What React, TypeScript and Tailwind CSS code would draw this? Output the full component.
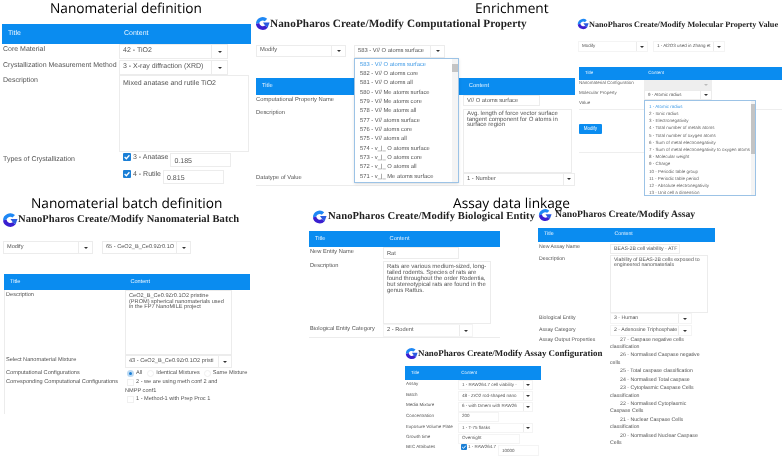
import React from "react";

const Logo = ({ className }: { className: string }) => (
  <svg viewBox="0 0 32 32" className={className}>
    <path d="M26 6 A14.5 14.5 0 0 0 2 17 L9 15 A8 8 0 0 1 21 11 Z" fill="#1e88f5" />
    <path d="M2 17 A14.5 14.5 0 0 0 27 25 L21.5 20.5 A8 8 0 0 1 9 15 Z" fill="#3a1fd0" />
    <path d="M17 14 L31 14 L27 25 L21.5 20.5 Z" fill="#2a5ae0" />
  </svg>
);

const Header = ({ className, content }: { className: string; content: string }) => (
  <div className={`flex items-center bg-[#0a8cf0] text-[#e8f4ff] ${className}`}>
    <span className="pl-[6px]">Title</span>
    <span className={content}>Content</span>
  </div>
);

const Select = ({ label, className, caret = "w-[16px]" }: { label: string; className: string; caret?: string }) => (
  <div className={`flex shrink-0 items-center border border-[#ececec] bg-white text-[#555] ${className}`}>
    <span className="flex-1 overflow-hidden whitespace-nowrap pl-[3px]">{label}</span>
    <span className={`flex h-full items-center justify-center border-l border-[#ececec] ${caret}`}>
      <span className="h-0 w-0 border-x-[2px] border-t-[2px] border-x-transparent border-t-[#333]" />
    </span>
  </div>
);

const Box = ({ children, className }: { children?: React.ReactNode; className: string }) => (
  <div className={`shrink-0 border border-[#ececec] bg-white pl-[3px] text-[#555] ${className}`}>{children}</div>
);

const Check = ({ className }: { className: string }) => (
  <span className={`flex shrink-0 items-center justify-center rounded-[1px] bg-[#1a7fd6] ${className}`}>
    <svg viewBox="0 0 10 10" className="h-full w-full">
      <path d="M2 5 L4.2 7.2 L8 2.8" fill="none" stroke="#fff" strokeWidth="1.6" />
    </svg>
  </span>
);

const SectionTitle = ({ children, className }: { children: string; className: string }) => (
  <div className={`absolute whitespace-nowrap font-['Open_Sans',sans-serif] text-[13.7px] leading-[16px] text-black ${className}`}>{children}</div>
);

const PageTitle = ({ children, className }: { children: string; className: string }) => (
  <div className={`whitespace-nowrap font-['Liberation_Serif',serif] font-bold text-[#222] ${className}`}>{children}</div>
);

const computationalItems = [
  "583 - V// O atoms surface",
  "582 - V// O atoms core",
  "581 - V// O atoms all",
  "580 - V// Me atoms surface",
  "579 - V// Me atoms core",
  "578 - V// Me atoms all",
  "577 - V// atoms surface",
  "576 - V// atoms core",
  "575 - V// atoms all",
  "574 - v_|_ O atoms surface",
  "573 - v_|_ O atoms core",
  "572 - v_|_ O atoms all",
  "571 - v_|_ Me atoms surface",
];

const molecularItems = [
  "1 - Atomic radius",
  "2 - Ionic radius",
  "3 - Electronegativity",
  "4 - Total number of metals atoms",
  "5 - Total number of oxygen atoms",
  "6 - Sum of metal electronegativity",
  "7 - Sum of metal electronegativity to oxygen atoms",
  "8 - Molecular weight",
  "9 - Charge",
  "10 - Periodic table group",
  "11 - Periodic table period",
  "12 - Absolute electronegativity",
  "13 - Unit cell a dimension",
];

const assayOutputs = [
  ["27 - Caspase negative cells", "classification"],
  ["26 - Normalised Caspase negative", "cells"],
  ["25 - Total caspase classification"],
  ["24 - Normalised Total caspase"],
  ["23 - Cytoplasmic Caspase Cells", "classification"],
  ["22 - Normalised Cytoplasmic", "Caspase Cells"],
  ["21 - Nuclear Caspase Cells", "classification"],
  ["20 - Normalised Nuclear Caspase", "Cells"],
];

const NanomaterialPanel = () => (
  <div className="absolute left-[2px] top-[24px] w-[249px] text-[7px] text-[#555]">
    <Header className="h-[20px]" content="ml-[103px]" />
    <div className="flex h-[16px]">
      <span className="w-[117px] pl-[1px] pt-[1px]">Core Material</span>
      <Select label="42 - TiO2" className="h-[15px] w-[109px]" caret="w-[16px]" />
    </div>
    <div className="flex h-[15px]">
      <span className="w-[117px] whitespace-nowrap pl-[1px] pt-[1px]">Crystallization Measurement Method</span>
      <Select label="3 - X-ray diffraction (XRD)" className="h-[15px] w-[109px]" />
    </div>
    <div className="flex h-[77px]">
      <span className="w-[117px] pl-[1px] pt-[1px]">Description</span>
      <Box className="h-[77px] w-[130px] pt-[3px]">Mixed anatase and rutile TiO2</Box>
    </div>
    <div className="flex">
      <span className="w-[117px] pl-[1px] pt-[3px]">Types of Crystallization</span>
      <div className="flex flex-col gap-[3px] pt-[1px]">
        <div className="flex items-start pl-[4px]">
          <Check className="h-[8px] w-[8px]" />
          <span className="ml-[2px] whitespace-nowrap">3 - Anatase</span>
          <Box className="ml-[2px] h-[14px] w-[61px] pt-[3px]">0.185</Box>
        </div>
        <div className="flex items-start pl-[4px]">
          <Check className="h-[8px] w-[8px]" />
          <span className="ml-[2px] whitespace-nowrap">4 - Rutile</span>
          <Box className="ml-[2px] h-[14px] w-[61px] pt-[3px]">0.815</Box>
        </div>
      </div>
    </div>
  </div>
);

const BatchPanel = () => (
  <div className="absolute left-[2px] top-[212px] w-[248px] text-[5.6px] text-[#555]">
    <div className="flex items-center">
      <Logo className="h-[16px] w-[16px]" />
      <PageTitle className="text-[10.5px] tracking-[0.1px]">NanoPharos Create/Modify Nanomaterial Batch</PageTitle>
    </div>
    <div className="mt-[13px] flex gap-[9px] pl-[1px]">
      <Select label="Modify" className="h-[13px] w-[90px]" caret="w-[14px]" />
      <Select label="65 - CeO2_B_Ce0.9Zr0.1O" className="h-[13px] w-[89px]" caret="w-[14px]" />
    </div>
    <div className="mt-[20px] pl-[2px]">
      <Header className="h-[16px]" content="ml-[110px]" />
      <div className="border-l border-[#ececec]">
        <div className="flex h-[65px] items-start">
          <span className="w-[120px] pl-[1px] pt-[1px]">Description</span>
          <Box className="h-[65px] w-[107px] pr-[5px] pt-[3px] leading-[5.6px]">
            CeO2_B_Ce0.9Zr0.1O2 pristine (PROM) spherical nanomaterials used in the FP7 NanoMILE project
          </Box>
        </div>
        <div className="flex h-[14px]">
          <span className="w-[120px] pl-[1px] pt-[1px]">Select Nanomaterial Mixture</span>
          <Select label="43 - CeO2_B_Ce0.9Zr0.1O2 pristi" className="h-[13px] w-[107px]" caret="w-[13px]" />
        </div>
        <div className="flex h-[9px] items-center whitespace-nowrap">
          <span className="w-[120px] pl-[1px]">Computational Configurations</span>
          <span className="ml-[2px] h-[7px] w-[7px] rounded-full border-2 border-[#bcd9f2] bg-[#1a7fd6]" />
          <span className="ml-[2px]">All</span>
          <span className="ml-[5px] h-[7px] w-[7px] rounded-full border border-[#f0f0f0]" />
          <span className="ml-[2px]">Identical Mixtures</span>
          <span className="ml-[4px] h-[7px] w-[7px] rounded-full border border-[#f0f0f0]" />
          <span className="ml-[2px]">Same Mixture</span>
        </div>
        <div className="flex">
          <span className="w-[120px] shrink-0 whitespace-nowrap pl-[1px]">Corresponding Computational Configurations</span>
          <div className="flex flex-col leading-[8.5px]">
            <div className="flex items-center whitespace-nowrap pl-[2px]">
              <span className="mr-[2px] h-[7px] w-[7px] border border-[#f0f0f0]" />
              2 - we are using meth conf 2 and
            </div>
            <span>NMPP conf1</span>
            <div className="flex items-center whitespace-nowrap pl-[2px]">
              <span className="mr-[2px] h-[7px] w-[7px] border border-[#f0f0f0]" />
              1 - Method-1 with Prep Proc 1
            </div>
          </div>
        </div>
        <div className="h-[10px]" />
      </div>
    </div>
  </div>
);

const ComputationalPanel = () => (
  <div className="absolute left-[255px] top-[15px] w-[320px] text-[5.8px] text-[#555]">
    <div className="flex items-center">
      <Logo className="h-[17px] w-[15px]" />
      <PageTitle className="pt-[1px] text-[11.2px] tracking-[0.1px]">NanoPharos Create/Modify Computational Property</PageTitle>
    </div>
    <div className="relative mt-[12px] flex gap-[8px] pl-[1px]">
      <Select label="Modify" className="h-[12px] w-[90px]" caret="w-[14px]" />
      <Select label="583 - V// O atoms surface" className="h-[13px] w-[91px] border-[#8fbfe8]" caret="w-[14px]" />
      <div className="absolute left-[99px] top-[13px] z-10 flex h-[125px] w-[105px] border border-[#9cc3e6] bg-white shadow-sm">
        <div className="flex-1 whitespace-nowrap pl-[5px] pt-[2px] leading-[9.33px]">
          {computationalItems.map((item, i) => (
            <div key={item} className={i === 0 ? "text-[#3f9ae6]" : ""}>{item}</div>
          ))}
        </div>
        <div className="w-[6px] bg-[#f4f4f4] pt-[5px]">
          <div className="h-[8px] bg-[#c4c4c4]" />
        </div>
      </div>
    </div>
    <div className="mt-[20px] pl-[1px]">
      <Header className="h-[17px]" content="ml-[196px]" />
      <div className="flex h-[14px]">
        <span className="w-[207px] pt-[1px]">Computational Property Name</span>
        <Box className="h-[11px] w-[77px] pt-[1px]">V// O atoms surface</Box>
      </div>
      <div className="flex h-[64px]">
        <span className="w-[207px]">Description</span>
        <Box className="h-[64px] w-[109px] pr-[2px] pt-[2px] text-[6px] leading-[5.8px]">
          Avg. length of force vector surface tangent component for O atoms in surface region
        </Box>
      </div>
      <div className="flex h-[13px] border-b border-[#ececec]">
        <span className="w-[207px] pt-[1px]">Datatype of Value</span>
        <Select label="1 - Number" className="h-[13px] w-[112px]" caret="w-[11px]" />
      </div>
    </div>
  </div>
);

const MolecularPanel = () => (
  <div className="absolute left-[577px] top-[17px] w-[205px] text-[4.5px] text-[#666]">
    <div className="flex items-center">
      <Logo className="h-[12px] w-[12px]" />
      <PageTitle className="pt-[2px] text-[8.2px]">NanoPharos Create/Modify Molecular Property Value</PageTitle>
    </div>
    <div className="mt-[10px] flex gap-[5px] pl-[1px]">
      <Select label="Modify" className="h-[11px] w-[70px] border-[#f4f4f4]" caret="w-[11px]" />
      <Select label="1 - Al2O3 used in Zhang et" className="h-[11px] w-[72px] border-[#f4f4f4]" caret="w-[11px]" />
    </div>
    <div className="mt-[15px] pl-[2px]">
      <Header className="h-[13px]" content="ml-[55px]" />
      <div className="relative">
        <div className="flex h-[10px]">
          <span className="w-[65px] whitespace-nowrap">Nanomaterial Configuration</span>
          <div className="flex h-[10px] w-[68px] items-center justify-end bg-[#eeeeee] pr-[4px] text-[#aaa]">
            <span className="h-0 w-0 border-x-[2px] border-t-[2px] border-x-transparent border-t-[#bbb]" />
          </div>
        </div>
        <div className="flex h-[10px]">
          <span className="w-[65px]">Molecular Property</span>
          <Select label="9 - Atomic radius" className="h-[10px] w-[68px] border-[#8fbfe8]" caret="w-[11px]" />
        </div>
        <div className="h-[10px] border-b border-[#eeeeee]">Value</div>
        <div className="absolute left-[65px] top-[20px] z-10 flex h-[96px] w-[112px] border border-[#9cc3e6] bg-white">
          <div className="flex-1 whitespace-nowrap pl-[4px] pt-[1.5px] leading-[7.2px]">
            {molecularItems.map((item, i) => (
              <div key={item} className={i === 0 ? "text-[#3f9ae6]" : ""}>{item}</div>
            ))}
          </div>
          <div className="w-[4px] bg-[#f4f4f4] pt-[3px]">
            <div className="h-[50px] bg-[#c4c4c4]" />
          </div>
        </div>
      </div>
      <button className="mt-[14px] h-[10px] w-[23px] rounded-[1px] bg-[#0a8cf0] text-white">Modify</button>
      <div className="mt-[18px] w-[65px] border-b border-[#eeeeee]" />
    </div>
  </div>
);

const BiologicalPanel = () => (
  <div className="absolute left-[309px] top-[209px] w-[230px] text-[5.7px] text-[#555]">
    <div className="flex items-center pl-[3px]">
      <Logo className="h-[16px] w-[15px]" />
      <PageTitle className="pl-[1px] text-[10.6px] tracking-[0.1px]">NanoPharos Create/Modify Biological Entity</PageTitle>
    </div>
    <div className="mt-[6px] w-[191px]">
      <Header className="h-[16px]" content="ml-[64px]" />
      <div className="flex h-[14px]">
        <span className="w-[74px] pl-[1px] pt-[1px]">New Entity Name</span>
        <Box className="h-[12px] w-[76px] pt-[2px]">Rat</Box>
      </div>
      <div className="flex h-[63px]">
        <span className="w-[74px] pl-[1px] pt-[1px]">Description</span>
        <Box className="h-[63px] w-[108px] pr-[2px] pt-[2px] text-[6px] leading-[6px]">
          Rats are various medium-sized, long-tailed rodents. Species of rats are found throughout the order Rodentia, but stereotypical rats are found in the genus Rattus.
        </Box>
      </div>
      <div className="flex h-[14px] border-b border-[#ececec]">
        <span className="w-[74px] whitespace-nowrap pl-[1px] pt-[1px]">Biological Entity Category</span>
        <Select label="2 - Rodent" className="h-[13px] w-[90px] border-[#f4f4f4]" caret="w-[13px]" />
      </div>
    </div>
  </div>
);

const AssayPanel = () => (
  <div className="absolute left-[538px] top-[208px] w-[180px] text-[5.2px] text-[#555]">
    <div className="flex items-center">
      <Logo className="h-[14px] w-[14px]" />
      <PageTitle className="pl-[3px] text-[9.7px]">NanoPharos Create/Modify Assay</PageTitle>
    </div>
    <div className="mt-[5px] w-[177px]">
      <Header className="h-[14px]" content="ml-[61px]" />
      <div className="flex h-[13px]">
        <span className="w-[72px] pl-[1px] pt-[2px]">New Assay Name</span>
        <Box className="mt-[2px] h-[10px] w-[70px] whitespace-nowrap pt-[1px]">BEAS-2B cell viability - ATF</Box>
      </div>
      <div className="flex h-[58px]">
        <span className="w-[72px] pl-[1px] pt-[1px]">Description</span>
        <Box className="h-[58px] w-[98px] pt-[2px] leading-[5.6px]">
          Viability of BEAS-2B cells exposed to engineered nanomaterials
        </Box>
      </div>
      <div className="flex h-[12px] items-center">
        <span className="w-[72px] pl-[1px]">Biological Entity</span>
        <Select label="3 - Human" className="h-[11px] w-[82px] border-[#f4f4f4]" caret="w-[13px]" />
      </div>
      <div className="flex h-[12px] items-center">
        <span className="w-[72px] pl-[1px]">Assay Category</span>
        <Select label="2 - Adenosine Triphosphate" className="h-[11px] w-[82px] border-[#f4f4f4]" caret="w-[13px]" />
      </div>
      <div className="flex">
        <span className="w-[72px] pl-[1px]">Assay Output Properties</span>
        <div className="flex flex-col gap-[1.4px] whitespace-nowrap leading-[7.2px]">
          {assayOutputs.map((lines) => (
            <div key={lines[0]}>
              <div className="pl-[10px]">{lines[0]}</div>
              {lines[1] && <div>{lines[1]}</div>}
            </div>
          ))}
        </div>
      </div>
    </div>
  </div>
);

const ConfigRow = ({ label, children }: { label: string; children: React.ReactNode }) => (
  <div className="flex h-[10.7px]">
    <span className="w-[53px] whitespace-nowrap pl-[1px] pt-[0.5px]">{label}</span>
    {children}
  </div>
);

const ConfigPanel = () => (
  <div className="absolute left-[405px] top-[347px] w-[200px] text-[4.5px] text-[#555]">
    <div className="flex items-center">
      <Logo className="h-[13px] w-[13px]" />
      <PageTitle className="text-[8.9px]">NanoPharos Create/Modify Assay Configuration</PageTitle>
    </div>
    <div className="mt-[6px] w-[136px]">
      <Header className="h-[14px]" content="ml-[42px]" />
      <ConfigRow label="Assay">
        <Select label="1 - RAW264.7 cell viability -" className="h-[10px] w-[75px] border-[#f4f4f4]" caret="w-[9px]" />
      </ConfigRow>
      <ConfigRow label="Batch">
        <Select label="48 - ZrO2 rod-shaped nano" className="h-[10px] w-[75px] border-[#f4f4f4]" caret="w-[9px]" />
      </ConfigRow>
      <ConfigRow label="Media Mixture">
        <Select label="6 - with Dmem with RAW26" className="h-[10px] w-[75px] border-[#f4f4f4]" caret="w-[9px]" />
      </ConfigRow>
      <ConfigRow label="Concentration">
        <Box className="h-[10px] w-[41px] border-[#f4f4f4]">200</Box>
      </ConfigRow>
      <ConfigRow label="Exposure Volume Plate">
        <Select label="1 - T-75 flasks" className="h-[10px] w-[75px] border-[#f4f4f4]" caret="w-[9px]" />
      </ConfigRow>
      <ConfigRow label="Growth time">
        <Box className="h-[10px] w-[62px] border-[#f4f4f4]">Overnight</Box>
      </ConfigRow>
      <div className="flex">
        <span className="w-[53px] whitespace-nowrap pl-[1px]">BEC Attributes</span>
        <Check className="ml-[3px] h-[6px] w-[6px]" />
        <span className="ml-[1px] whitespace-nowrap">1 - RAW264.7</span>
        <Box className="ml-[2px] mt-[1px] h-[11px] w-[41px] border-[#f4f4f4] pt-[2px]">10000</Box>
      </div>
    </div>
  </div>
);

export default function App() {
  return (
    <div className="relative h-[458px] w-[783px] overflow-hidden bg-white font-['Liberation_Sans',Arial,sans-serif] blur-[0.3px] [text-rendering:geometricPrecision]">
      <SectionTitle className="left-[50px] top-[1px]">Nanomaterial definition</SectionTitle>
      <SectionTitle className="left-[475px] top-[1px]">Enrichment</SectionTitle>
      <SectionTitle className="left-[31px] top-[196px]">Nanomaterial batch definition</SectionTitle>
      <SectionTitle className="left-[453px] top-[196px]">Assay data linkage</SectionTitle>
      <NanomaterialPanel />
      <ComputationalPanel />
      <MolecularPanel />
      <BatchPanel />
      <BiologicalPanel />
      <AssayPanel />
      <ConfigPanel />
    </div>
  );
}
